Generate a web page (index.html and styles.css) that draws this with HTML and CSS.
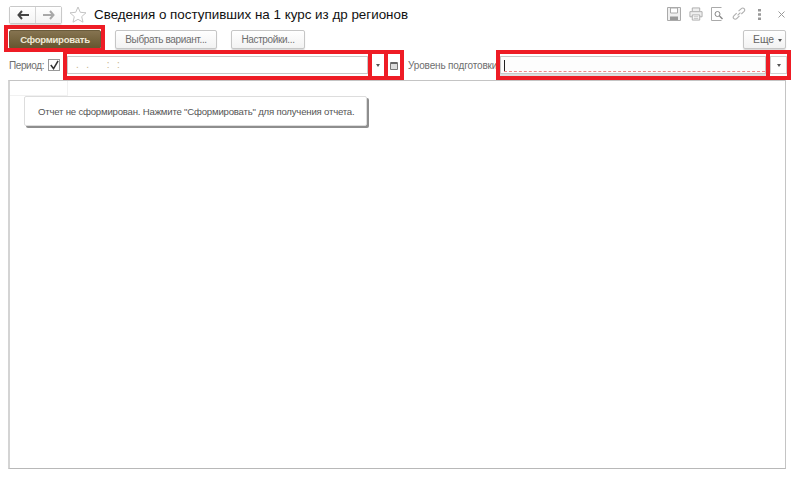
FILE: index.html
```html
<!DOCTYPE html>
<html lang="ru">
<head>
<meta charset="utf-8">
<title>Сведения о поступивших</title>
<link rel="stylesheet" href="styles.css">
</head>
<body>
<div class="page">
  <header class="head">
    <div class="nav">
      <button class="nav-btn"><svg width="12" height="10" viewBox="0 0 12 10"><path d="M5 1 1.500 5 5 9M2 5h10" fill="none" stroke="#444" stroke-width="2"/></svg></button>
      <button class="nav-btn"><svg width="12" height="10" viewBox="0 0 12 10"><path d="M7 1l3.500 4L7 9M0 5h10" fill="none" stroke="#a8a8a8" stroke-width="2"/></svg></button>
    </div>
    <svg class="star" width="18" height="17" viewBox="0 0 18 17"><path d="M9 1l2.300 5.300 5.700.5-4.300 3.800 1.300 5.600L9 13.300l-5 2.900 1.300-5.600L1 6.800l5.700-.5z" fill="#fff" stroke="#c4c4c4"/></svg>
    <h1 class="title">Сведения о поступивших на 1 курс из др регионов</h1>
    <div class="tools">
      <svg class="t-save" width="14" height="14" viewBox="0 0 14 14"><path d="M.5.500h13v13H.5z" fill="#f0f0f0" stroke="#aaa"/><path d="M3.500 1h7v5h-7z" fill="#fff" stroke="#aaa"/><path d="M3 9.500h8V13H3z" fill="#999"/></svg>
      <svg class="t-print" width="14" height="14" viewBox="0 0 15 14"><path d="M3.500 4V.500h8V4M3.500 10H1V4.500h13V10h-2.500" fill="#f0f0f0" stroke="#aaa"/><path d="M3.500 8h8v5.500h-8z" fill="#fff" stroke="#aaa"/><path d="M5 10h5M5 12h5" stroke="#bbb"/></svg>
      <svg class="t-prev" width="12" height="14" viewBox="0 0 12 14"><path d="M10.500 13.500h-10v-13h10" fill="none" stroke="#aaa"/><circle cx="6.500" cy="7" r="2.500" fill="none" stroke="#888"/><path d="M8.500 9l3 3" stroke="#888" stroke-width="1.400"/></svg>
      <svg class="t-link" width="14" height="14" viewBox="0 0 15 14"><path d="M6 8.500l3-3M5 6 2 9a2 2 0 0 0 3 3l3-3M7 4l3-2.800a2 2 0 0 1 3 3L10 7" fill="none" stroke="#b0b0b0" stroke-width="1.200"/></svg>
      <svg class="t-dots" width="3" height="11" viewBox="0 0 3 11"><path d="M0 0h3v2.500H0zM0 4.200h3v2.500H0zM0 8.400h3V11H0z" fill="#999"/></svg>
      <svg class="t-close" width="7" height="7" viewBox="0 0 7 7"><path d="M.5.500l6 6M6.500.500l-6 6" stroke="#999"/></svg>
    </div>
  </header>

  <div class="toolbar">
    <button class="btn primary">Сформировать</button>
    <button class="btn variant">Выбрать вариант...</button>
    <button class="btn settings">Настройки...</button>
    <button class="btn more">Еще <span class="caret"></span></button>
  </div>

  <div class="filters">
    <span class="label period">Период:</span>
    <span class="check"><svg width="11" height="11" viewBox="0 0 11 11"><path d="M2 5l3 4 5-8.500" fill="none" stroke="#333" stroke-width="1.700"/></svg></span>
    <div class="field date"><span class="mask">. .&nbsp;&nbsp;&nbsp;: :</span></div>
    <span class="mini drop"><span class="caret"></span></span>
    <span class="mini cal"><svg width="8" height="9" viewBox="0 0 8 9"><path d="M.5 1.500h7v7h-7z" fill="#ddd" stroke="#777"/><path d="M1 1h6v2H1z" fill="#666"/></svg></span>
    <span class="label level">Уровень подготовки:</span>
    <div class="field select"><span class="cursor"></span><span class="required"></span></div>
    <span class="mini drop2"><span class="caret"></span></span>
  </div>

  <main class="report">
    <div class="corner"></div>
    <div class="notice">Отчет не сформирован. Нажмите "Сформировать" для получения отчета.</div>
  </main>

  <div class="mark m1"></div>
  <div class="mark m2"></div>
  <div class="mark m3"></div>
  <div class="mark m4"></div>
  <div class="mark m5"></div>
  <div class="mark m6"></div>
</div>
</body>
</html>
```
FILE: styles.css
```css
* { box-sizing: border-box; }
html, body { margin: 0; padding: 0; background: #fff; }
body { font-family: "Liberation Sans", Arial, sans-serif; color: #4a4a4a; }
button { font-family: inherit; padding: 0; margin: 0; }
.page { position: relative; width: 800px; height: 479px; overflow: hidden; display: flex; flex-direction: column; }

.head { height: 30px; display: flex; align-items: center; padding: 0 15px 0 9px; flex: none; }
.nav { display: flex; width: 53px; height: 18px; border: 1px solid #c9c9c9; border-radius: 2px; box-shadow: 0 1px 1px #ddd; margin-top: -1px; }
.nav-btn { flex: 1; border: 0; background: linear-gradient(#fff, #f3f3f3); display: flex; align-items: center; justify-content: center; }
.nav-btn + .nav-btn { border-left: 1px solid #d5d5d5; }
.star { margin: -1px 0 0 7px; flex: none; }
.title { margin: -1px 0 0 7px; font-size: 13.4px; font-weight: 400; color: #111; white-space: nowrap; flex: 1; }
.tools { display: flex; align-items: center; margin-top: -2px; }
.t-print { margin-left: 8px; }
.t-prev { margin-left: 8px; }
.t-link { margin-left: 9px; }
.t-dots { margin-left: 12px; }
.t-close { margin-left: 17px; }

.toolbar { height: 20px; display: flex; padding: 0 14px 0 9px; flex: none; }
.btn { height: 19px; border: 1px solid #c6c6c6; border-radius: 2px; background: linear-gradient(#fff, #f2f2f2); box-shadow: 0 1px 1px #d8d8d8; font-size: 10px; letter-spacing: -.35px; color: #6e6e6e; }
.primary { width: 92px; border-color: #6a5c3c; background: linear-gradient(#857350, #66562f); color: #efe9d8; font-weight: 700; font-size: 9.6px; letter-spacing: -.3px; box-shadow: none; }
.variant { width: 102px; margin-left: 14px; }
.settings { width: 74px; margin-left: 14px; }
.more { width: 43px; margin-left: auto; padding-left: 6px; font-size: 10.4px; letter-spacing: 0; color: #666; }

.caret { display: inline-block; width: 0; height: 0; border: 2px solid transparent; border-top: 3px solid #555; border-bottom: 0; vertical-align: middle; }
.more .caret { margin-left: 1px; }

.filters { height: 30px; display: flex; align-items: center; padding: 0 0 0 9px; flex: none; position: relative; }
.label { font-size: 10px; letter-spacing: -.15px; color: #6e6e6e; white-space: nowrap; }
.period { width: 39px; letter-spacing: -.4px; }
.check { width: 12px; height: 12px; border: 1px solid #999; background: #fff; display: flex; align-items: center; justify-content: center; }
.field { height: 18px; border: 1px solid #c8c8c8; background: #fff; position: relative; }
.date { width: 301px; margin-left: 7px; padding-left: 8px; font-size: 10px; line-height: 16px; color: #c9b48a; }
.mask { letter-spacing: 2.350px; }
.mini { height: 18px; background: #fff; display: flex; align-items: center; justify-content: center; }
.drop { width: 12px; margin-left: 4px; }
.cal { width: 12px; margin-left: 4px; }
.level { margin-left: 8px; width: 88px; }
.select { width: 266px; margin-left: 4px; background: #fdfdfd; box-shadow: 0 2px 0 #dedede; }
.cursor { position: absolute; left: 3px; top: 3px; width: 1px; height: 12px; background: #222; }
.required { position: absolute; left: 3px; right: 0; top: 14px; border-top: 1px dashed #f08a8a; }
.drop2 { width: 17px; margin-left: 4px; border: 1px solid #d0d0d0; }

.report { position: relative; width: 778px; height: 389px; margin-left: 8px; border: 1px solid #c4c4c4; border-left: 2px solid #d4d4d4; border-bottom: 1px solid #b8b8b8; flex: none; }
.corner { width: 58px; height: 15px; border-right: 1px solid #f1f1f1; border-bottom: 1px solid #f1f1f1; }
.notice { position: absolute; left: 14px; top: 15px; width: 343px; height: 30px; padding: 0 0 0 13px; display: flex; align-items: center; background: #fff; border: 1px solid #ddd; border-radius: 2px; box-shadow: 2px 2px 0 #8e8e8e; font-size: 9.600px; letter-spacing: -.2px; color: #555; white-space: nowrap; }

.mark { position: absolute; border: 4px solid #ee1c25; pointer-events: none; }
.m1 { left: 4px; top: 25px; width: 101px; height: 27px; }
.m2 { left: 63px; top: 50px; width: 309px; height: 30px; }
.m3 { left: 368px; top: 50px; width: 20px; height: 30px; }
.m4 { left: 384px; top: 50px; width: 20px; height: 30px; }
.m5 { left: 496px; top: 50px; width: 274px; height: 30px; }
.m6 { left: 766px; top: 50px; width: 25px; height: 30px; }
```
